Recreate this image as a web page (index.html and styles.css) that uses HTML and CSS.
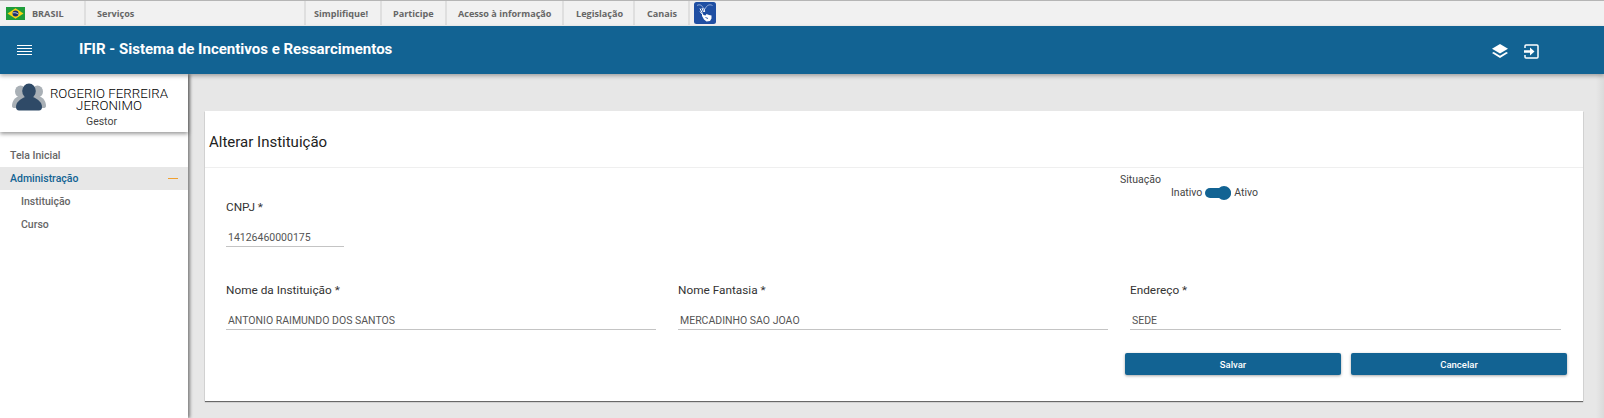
FILE: index.html
```html
<!DOCTYPE html>
<html lang="pt-BR">
<head>
<meta charset="utf-8">
<title>IFIR</title>
<link rel="stylesheet" href="styles.css">
</head>
<body>
<div class="govbar">
  <div class="gov-item gov-brasil">
    <svg class="flag" viewBox="0 0 19 13" width="19" height="13"><rect width="19" height="13" fill="#1f9d3a"/><path d="M9.500 1.300 17.500 6.500 9.500 11.700 1.500 6.500z" fill="#f7d117"/><circle cx="9.500" cy="6.500" r="3" fill="#1c2f6e"/><path d="M6.700 5.900c2-.5 4-.1 5.600 1.200" stroke="#fff" stroke-width=".7" fill="none"/></svg>
    <span>BRASIL</span>
  </div>
  <div class="gov-item gov-servicos"><span>Serviços</span></div>
  <div class="gov-item gov-s1"><span>Simplifique!</span></div>
  <div class="gov-item gov-s2"><span>Participe</span></div>
  <div class="gov-item gov-s3"><span>Acesso à informação</span></div>
  <div class="gov-item gov-s4"><span>Legislação</span></div>
  <div class="gov-item gov-s5"><span>Canais</span></div>
  <div class="vlibras">
    <svg viewBox="0 0 22 22" width="22" height="22"><rect width="22" height="22" rx="2.500" fill="#1f4fa3"/><path d="M3 3.500c2.500-1.500 5-.5 6.500 3 .6 1 1.200 1 1.800 0C13 3 15.500 2 18.500 3.500" stroke="#c9d6ee" stroke-width=".7" fill="none"/><path d="M8 10.500l1.500 2.500 2 .5 1-1.500 2.500 1 2.500.5v3l-1.500 2.500-3.500.5-2.500-2-2-3.500z" fill="#fff"/><path d="M6 6.500l2 4M8 6l1.500 4M10 6.500l.7 3.500M6 9.500l2.500 3" stroke="#fff" stroke-width="1"/><path d="M11.500 15.500l2.500 1" stroke="#1f4fa3" stroke-width=".9"/></svg>
  </div>
</div>
<header class="topbar">
  <button class="menu-btn" aria-label="menu">
    <span></span><span></span><span></span><span></span>
  </button>
  <h1 class="app-title">IFIR - Sistema de Incentivos e Ressarcimentos</h1>
  <div class="top-icons">
    <svg viewBox="0 0 16 15" width="16" height="15"><path d="M8 0l8 4.800L8 9.600 0 4.800z" fill="#fff"/><path d="M1.700 8 8 11.800 14.300 8 16 9.100 8 14 0 9.100z" fill="#fff"/></svg>
    <svg viewBox="0 0 15 15" width="15" height="15"><path d="M1 4V2a1 1 0 0 1 1-1h11a1 1 0 0 1 1 1v11a1 1 0 0 1-1 1H2a1 1 0 0 1-1-1v-2" fill="none" stroke="#fff" stroke-width="1.500"/><path d="M0 6.300h6V3.500L10.500 7.500 6 11.500V8.700H0z" fill="#fff"/></svg>
  </div>
</header>
<div class="layout">
  <aside class="sidebar">
    <div class="user">
      <svg class="avatar" viewBox="0 0 34 29" width="34" height="29">
        <g fill="#a9b0b6"><ellipse cx="8.500" cy="8.500" rx="5.500" ry="6"/><path d="M0 23c0-5 3-9 8-10h6v12H2.500C1 25 0 24.500 0 23z"/><ellipse cx="25.500" cy="8.500" rx="5.500" ry="6"/><path d="M34 23c0-5-3-9-8-10h-6v12h11.500c1.500 0 2.500-.5 2.500-2z"/></g>
        <g fill="#2f4a67"><ellipse cx="17" cy="8" rx="6.800" ry="7.500"/><path d="M4 24c0-5 4.500-8 9-10h8c4.500 2 9 5 9 10 0 2-1 3.500-3 3.500H7c-2 0-3-1.500-3-3.500z"/></g>
      </svg>
      <div class="user-text">
        <div class="user-name">ROGERIO FERREIRA<br>JERONIMO</div>
        <div class="user-role">Gestor</div>
      </div>
    </div>
    <nav class="nav">
      <div class="nav-item">Tela Inicial</div>
      <div class="nav-item nav-active"><span>Administração</span><i class="dash"></i></div>
      <div class="nav-item nav-sub">Instituição</div>
      <div class="nav-item nav-sub">Curso</div>
    </nav>
  </aside>
  <main class="main">
    <section class="card">
      <h2 class="card-title">Alterar Instituição</h2>
      <div class="card-body">
        <div class="row-top">
          <div class="field field-cnpj">
            <label class="label">CNPJ *</label>
            <div class="input">14126460000175</div>
          </div>
          <div class="situacao">
            <div class="sit-label">Situação</div>
            <div class="switch-row">
              <span>Inativo</span><span class="switch"><i></i></span><span>Ativo</span>
            </div>
          </div>
        </div>
        <div class="row-fields">
          <div class="field"><label class="label">Nome da Instituição *</label><div class="input">ANTONIO RAIMUNDO DOS SANTOS</div></div>
          <div class="field"><label class="label">Nome Fantasia *</label><div class="input">MERCADINHO SAO JOAO</div></div>
          <div class="field"><label class="label">Endereço *</label><div class="input">SEDE</div></div>
        </div>
        <div class="actions">
          <button class="btn">Salvar</button>
          <button class="btn">Cancelar</button>
        </div>
      </div>
    </section>
  </main>
</div>
</body>
</html>
```

FILE: styles.css
```css
* { box-sizing: border-box; }
html, body { margin: 0; height: 100%; overflow: hidden; }
body { font-family: Roboto, "Liberation Sans", sans-serif; background: #e7e7e7; color: #222; width: 1604px; height: 418px; display: flex; flex-direction: column; }

.govbar { height: 26px; flex: none; display: flex; background: #f1f1f1; border-top: 1px solid #b5b5b5; font-family: "Open Sans", "Noto Sans", sans-serif; font-size: 9.1px; font-weight: 700; color: #666; }
.gov-item { height: 24px; display: flex; align-items: center; border-right: 2px solid #dfdfdf; }
.gov-brasil { width: 86px; padding-left: 6px; gap: 7px; }
.gov-servicos { width: 220px; padding-left: 11px; }
.gov-s1 { width: 76px; padding-left: 8px; }
.gov-s2 { width: 65px; padding-left: 11px; }
.gov-s3 { width: 117px; padding-left: 11px; }
.gov-s4 { width: 71px; padding-left: 12px; }
.gov-s5 { width: 55px; padding-left: 12px; }
.vlibras { margin-left: 4px; margin-top: 1px; height: 22px; width: 22px; }
.vlibras svg { display: block; }
.flag { flex: none; }

.topbar { height: 48px; flex: none; background: #126393; display: flex; align-items: center; color: #fff; box-shadow: 0 2px 4px rgba(0,0,0,.3); position: relative; z-index: 3; }
.menu-btn { background: none; border: 0; padding: 0; margin-left: 17px; width: 15px; height: 10px; display: flex; flex-direction: column; justify-content: space-between; }
.menu-btn span { display: block; height: 1px; background: #fff; width: 15px; }
.app-title { margin: -3px 0 0 47px; font-size: 15px; font-weight: 700; line-height: 48px; }
.top-icons { margin: 2px 65px 0 auto; display: flex; align-items: center; gap: 16px; }
.top-icons svg { display: block; }

.layout { flex: 1; display: flex; min-height: 0; }
.sidebar { width: 188px; flex: none; background: #fff; box-shadow: 2px 0 3px rgba(0,0,0,.45); position: relative; z-index: 2; }
.user { height: 58px; display: flex; padding: 9px 0 0 12px; box-shadow: 0 2px 4px rgba(0,0,0,.4); }
.avatar { flex: none; display: block; margin-right: 2px; }
.user-text { width: 122px; text-align: center; }
.user-name { font-size: 13.3px; line-height: 12px; margin-top: 5px; font-weight: 300; color: #000; }
.user-role { font-size: 10.5px; margin: 3px 15px 0 0; line-height: 14px; color: #444; }
.nav { padding-top: 12px; }
.nav-item { height: 23px; display: flex; align-items: center; padding-left: 10px; font-size: 10.5px; font-weight: 500; color: #666; }
.nav-active { background: #e7e7e7; color: #126393; justify-content: space-between; padding-right: 10px; }
.dash { width: 10px; height: 1px; background: #f0a030; display: block; }
.nav-sub { padding-left: 21px; }

.main { flex: 1; padding: 37px 21px 0 17px; min-width: 0; background: linear-gradient(to left, #dadada, #e7e7e7 8px); }
.card { background: #fff; height: 290px; box-shadow: 0 1px 1px rgba(0,0,0,.55); }
.card-title { margin: 0; height: 57px; border-bottom: 1px solid #efefef; font-size: 15px; font-weight: 400; line-height: 62px; padding-left: 4px; color: #222; }
.row-top { height: 93px; display: flex; justify-content: space-between; }
.field-cnpj { margin: 31px 0 0 21px; width: 118px; }
.label { display: block; font-size: 11.8px; line-height: 16px; color: #333; }
.input { font-size: 10.5px; color: #555; border-bottom: 1px solid #c4c4c4; height: 17px; line-height: 16px; padding-left: 2px; margin-top: 15px; }
.situacao { width: 463px; padding-top: 6px; font-size: 10.5px; color: #444; }
.sit-label { line-height: 12px; }
.switch-row { display: flex; align-items: center; margin: 0 0 0 51px; gap: 2px; }
.switch { width: 26px; height: 10px; border-radius: 5px; background: #126393; display: inline-block; position: relative; margin: 0 1px; }
.switch i { position: absolute; right: 0; top: -2px; width: 14px; height: 14px; border-radius: 50%; background: #126393; }
.row-fields { display: grid; grid-template-columns: 430px 430px 431px; column-gap: 22px; padding-left: 21px; margin-top: 21px; }
.actions { display: flex; justify-content: flex-end; gap: 10px; padding-right: 16px; margin-top: 23px; }
.btn { width: 216px; height: 22px; background: #126393; color: #fff; border: 0; border-radius: 2px; font-family: inherit; font-size: 9.5px; font-weight: 500; box-shadow: 0 1px 3px rgba(0,0,0,.35); padding: 0; }
```
